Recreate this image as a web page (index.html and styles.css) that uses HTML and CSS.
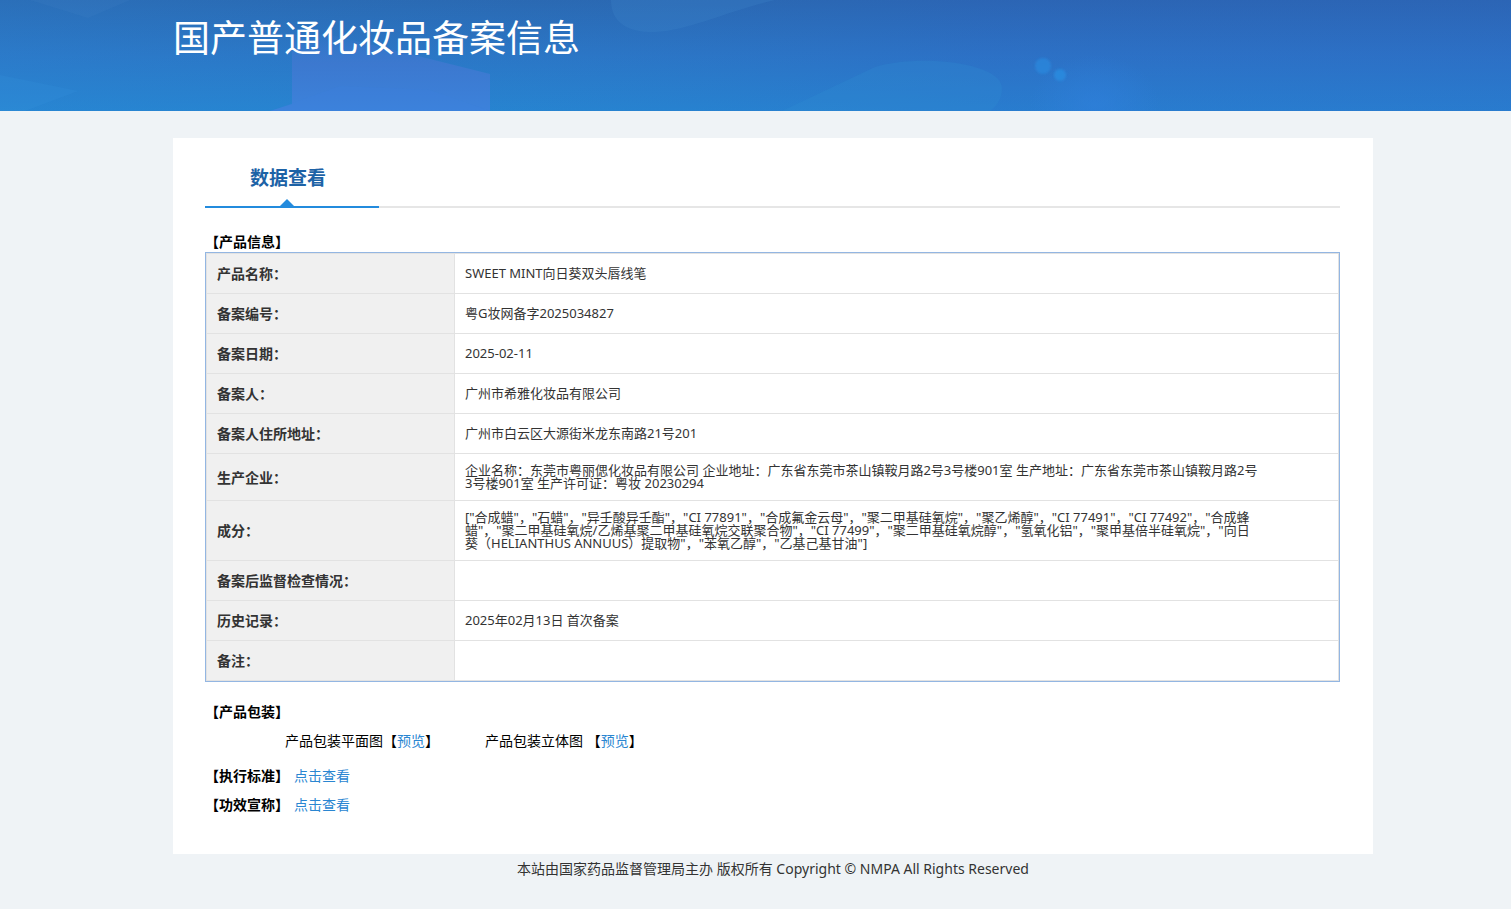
FILE: index.html
```html
<!DOCTYPE html>
<html lang="zh-CN">
<head>
    <meta charset="UTF-8">
    <meta name="viewport" content="width=device-width, initial-scale=1.0">
    <title>国产普通化妆品备案信息</title>
    <link rel="stylesheet" href="styles.css">
</head>
<body>

    <!-- Banner -->
    <header class="banner">
        <svg class="banner-bg" viewBox="0 0 1511 111" preserveAspectRatio="none" aria-hidden="true">
            <defs>
                <linearGradient id="sky" x1="0" y1="0" x2="0" y2="1">
                    <stop offset="0" stop-color="#2b66b0"/>
                    <stop offset="0.5" stop-color="#2c75c6"/>
                    <stop offset="1" stop-color="#2784d2"/>
                </linearGradient>
                <linearGradient id="shade" x1="0" y1="0" x2="1" y2="0">
                    <stop offset="0" stop-color="#2a8bd4" stop-opacity="0.25"/>
                    <stop offset="0.35" stop-color="#2580c4" stop-opacity="0.12"/>
                    <stop offset="0.65" stop-color="#2e62c4" stop-opacity="0.22"/>
                    <stop offset="1" stop-color="#2e62c4" stop-opacity="0.26"/>
                </linearGradient>
                <linearGradient id="block" x1="0" y1="0" x2="0" y2="1">
                    <stop offset="0" stop-color="#3f78d0" stop-opacity="0"/>
                    <stop offset="0.4" stop-color="#3f78d0" stop-opacity="0.85"/>
                    <stop offset="1" stop-color="#3c82db"/>
                </linearGradient>
                <radialGradient id="glow">
                    <stop offset="0" stop-color="#2f80dd" stop-opacity="0.6"/>
                    <stop offset="1" stop-color="#2f80dd" stop-opacity="0"/>
                </radialGradient>
                <filter id="soft"><feGaussianBlur stdDeviation="1"/></filter>
            </defs>
            <rect width="1511" height="111" fill="url(#sky)"/>
            <rect width="1511" height="111" fill="url(#shade)"/>
            <path d="M30 0L88 18L130 0Z" fill="#4b86cc" opacity="0.15"/>
            <path d="M0 75L78 91L25 111L0 111Z" fill="#3a9be2" opacity="0.15"/>
            <path d="M292 30L335 36L410 54L490 74L490 111L270 111L292 104Z" fill="url(#block)"/>
            <path d="M270 111L340 86L430 90L490 111Z" fill="#3a84e0" opacity="0.2"/>
            <path d="M611 0C611 24 630 33 656 32C690 30 730 10 775 0Z" fill="#4186cc" opacity="0.25"/>
            <path d="M782 111L875 67C920 54 1000 62 1002 88C1002 98 997 106 990 111Z" fill="#3090d5" opacity="0.25"/>
            <ellipse cx="1095" cy="105" rx="65" ry="50" fill="url(#glow)"/>
            <g fill="#2a89de" filter="url(#soft)">
                <circle cx="1043" cy="66" r="8" opacity="0.7"/>
                <circle cx="1060" cy="75" r="6" opacity="0.9"/>
            </g>
        </svg>
        <div class="wrap">
            <h1>国产普通化妆品备案信息</h1>
        </div>
    </header>

    <main class="content">
        <div class="card">
            <div class="tabs">
                <h2 class="tab">数据查看</h2>
            </div>

            <h3>【产品信息】</h3>
            <table class="info">
                <tr>
                    <th scope="row">产品名称：</th>
                    <td>SWEET MINT向日葵双头唇线笔</td>
                </tr>
                <tr>
                    <th scope="row">备案编号：</th>
                    <td>粤G妆网备字2025034827</td>
                </tr>
                <tr>
                    <th scope="row">备案日期：</th>
                    <td>2025-02-11</td>
                </tr>
                <tr>
                    <th scope="row">备案人：</th>
                    <td>广州市希雅化妆品有限公司</td>
                </tr>
                <tr>
                    <th scope="row">备案人住所地址：</th>
                    <td>广州市白云区大源街米龙东南路21号201</td>
                </tr>
                <tr>
                    <th scope="row">生产企业：</th>
                    <td>企业名称：东莞市粤丽偲化妆品有限公司 企业地址：广东省东莞市茶山镇鞍月路2号3号楼901室 生产地址：广东省东莞市茶山镇鞍月路2号<br>3号楼901室 生产许可证：粤妆 20230294</td>
                </tr>
                <tr>
                    <th scope="row">成分：</th>
                    <td>["合成蜡"，"石蜡"，"异壬酸异壬酯"，"CI 77891"，"合成氟金云母"，"聚二甲基硅氧烷"，"聚乙烯醇"，"CI 77491"，"CI 77492"，"合成蜂<br>蜡"，"聚二甲基硅氧烷/乙烯基聚二甲基硅氧烷交联聚合物"，"CI 77499"，"聚二甲基硅氧烷醇"，"氢氧化铝"，"聚甲基倍半硅氧烷"，"向日<br>葵（HELIANTHUS ANNUUS）提取物"，"苯氧乙醇"，"乙基己基甘油"]</td>
                </tr>
                <tr>
                    <th scope="row">备案后监督检查情况：</th>
                    <td></td>
                </tr>
                <tr>
                    <th scope="row">历史记录：</th>
                    <td>2025年02月13日 首次备案</td>
                </tr>
                <tr>
                    <th scope="row">备注：</th>
                    <td></td>
                </tr>
            </table>

            <!-- Package previews and documents -->
            <div class="extra">
                <h3>【产品包装】</h3>
                <div class="package">
                    <span>产品包装平面图【<a href="#">预览</a>】</span>
                    <span>产品包装立体图 【<a href="#">预览</a>】</span>
                </div>
                <div class="doc"><h3>【执行标准】</h3><a href="#">点击查看</a></div>
                <div class="doc"><h3>【功效宣称】</h3><a href="#">点击查看</a></div>
            </div>
        </div>

        <footer>本站由国家药品监督管理局主办 版权所有 Copyright © NMPA All Rights Reserved</footer>
    </main>

</body>
</html>
```
FILE: styles.css
```css
body {
    margin: 0;
    background-color: #eff3f6;
    font-family: "Noto Sans", "Noto Sans CJK SC", sans-serif;
    font-size: 14px;
    line-height: 20px;
    color: #000;
}

h1, h2, h3 {
    margin: 0;
}

a {
    color: #2a86d1;
    text-decoration: none;
}

/* Banner */
.banner {
    position: relative;
    height: 111px;
    padding-left: 35px;
    overflow: hidden;
    background-color: #2b74c5;
}

.banner-bg {
    position: absolute;
    top: 0;
    left: 0;
    width: 100%;
    height: 100%;
}

.wrap {
    position: relative; /* Keep the title above the background */
    max-width: 1200px;
    margin: 0 auto;
}

.banner h1 {
    padding-top: 10px;
    font-size: 37px;
    line-height: 56px;
    font-weight: 400;
    color: #fff;
}

/* Centered column, same left gutter as the banner */
.content {
    max-width: 1200px;
    margin: 0 auto;
    padding-left: 35px;
}

/* White card */
.card {
    margin-top: 27px;
    padding: 24px 33px 30px 32px;
    background-color: #fff;
}

/* Tab bar */
.tabs {
    display: flex;
    border-bottom: 2px solid #e6e6e6;
    margin-bottom: 24px;
}

.tab {
    position: relative;
    width: 174px;
    padding: 0 8px 12px 0;
    box-sizing: border-box;
    margin-bottom: -2px;
    border-bottom: 2px solid #238bdd;
    font-size: 19px;
    line-height: 32px;
    text-align: center;
    color: #1d62a6;
}

.tab::after {
    content: "";
    position: absolute;
    left: 75px;
    bottom: 0;
    border: 7px solid transparent;
    border-top: 0;
    border-bottom-color: #238bdd;
}

h3 {
    font-size: 14px;
    line-height: 20px;
}

/* Product table */
.info {
    width: 100%;
    border: 1px solid #93b6e2;
    border-collapse: separate;
    border-spacing: 0;
    color: #333;
}

.info th, .info td {
    height: 40px;
    box-sizing: border-box;
    padding: 10px;
    border-bottom: 1px solid #e2e2e2;
    border-right: 1px solid #e2e2e2;
    text-align: left;
    line-height: 13px;
}

.info th {
    width: 249px;
    border-left: 1px solid #e2e2e2;
    background-color: #f0f0f0;
}

.info td {
    font-size: 13px;
}

.info tr:first-child th, .info tr:first-child td {
    height: 41px;
    border-top: 1px solid #e2e2e2;
}

/* Package previews and documents */
.extra {
    margin-top: 20px;
}

.package {
    display: flex;
    gap: 46px;
    padding: 9px 0 15px 80px;
}

.doc {
    display: flex;
    gap: 5px;
    margin-bottom: 9px;
}

footer {
    padding: 5px 0 20px;
    text-align: center;
    color: #333;
}
```
